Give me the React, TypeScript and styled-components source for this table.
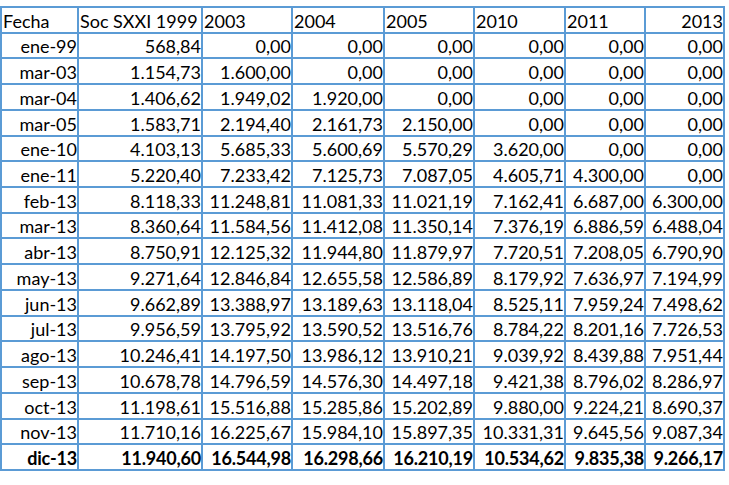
import styled, { createGlobalStyle } from 'styled-components';

const GlobalStyle = createGlobalStyle`
	body {
		margin: 0;
		background: #ffffff;
	}
`;

const Page = styled.div`
	padding-top: 6px;
`;

const Sheet = styled.div`
	display: inline-grid;
	grid-template-columns: 75px 122px 88px 90px 88px 89px 78px 77px;
	grid-auto-rows: 23.72px;
	gap: 2px;
	padding: 2px;
	background: #5b9bd5;
	font-family: Lato, 'Liberation Sans', sans-serif;
	font-size: 18px;
	color: #000000;
`;

const Cell = styled.div<{ $align: 'left' | 'right'; $bold?: boolean }>`
	display: flex;
	align-items: flex-end;
	justify-content: ${(p) => (p.$align === 'left' ? 'flex-start' : 'flex-end')};
	padding: 0 0 1px 1px;
	background: #ffffff;
	line-height: 20px;
	white-space: nowrap;
	font-weight: ${(p) => (p.$bold ? 700 : 400)};
	letter-spacing: ${(p) => (p.$bold ? '-0.2px' : '0')};
`;

const headers = ['Fecha', 'Soc SXXI 1999', '2003', '2004', '2005', '2010', '2011', '2013'];

const rows: string[][] = [
	['ene-99', '568,84', '0,00', '0,00', '0,00', '0,00', '0,00', '0,00'],
	['mar-03', '1.154,73', '1.600,00', '0,00', '0,00', '0,00', '0,00', '0,00'],
	['mar-04', '1.406,62', '1.949,02', '1.920,00', '0,00', '0,00', '0,00', '0,00'],
	['mar-05', '1.583,71', '2.194,40', '2.161,73', '2.150,00', '0,00', '0,00', '0,00'],
	['ene-10', '4.103,13', '5.685,33', '5.600,69', '5.570,29', '3.620,00', '0,00', '0,00'],
	['ene-11', '5.220,40', '7.233,42', '7.125,73', '7.087,05', '4.605,71', '4.300,00', '0,00'],
	['feb-13', '8.118,33', '11.248,81', '11.081,33', '11.021,19', '7.162,41', '6.687,00', '6.300,00'],
	['mar-13', '8.360,64', '11.584,56', '11.412,08', '11.350,14', '7.376,19', '6.886,59', '6.488,04'],
	['abr-13', '8.750,91', '12.125,32', '11.944,80', '11.879,97', '7.720,51', '7.208,05', '6.790,90'],
	['may-13', '9.271,64', '12.846,84', '12.655,58', '12.586,89', '8.179,92', '7.636,97', '7.194,99'],
	['jun-13', '9.662,89', '13.388,97', '13.189,63', '13.118,04', '8.525,11', '7.959,24', '7.498,62'],
	['jul-13', '9.956,59', '13.795,92', '13.590,52', '13.516,76', '8.784,22', '8.201,16', '7.726,53'],
	['ago-13', '10.246,41', '14.197,50', '13.986,12', '13.910,21', '9.039,92', '8.439,88', '7.951,44'],
	['sep-13', '10.678,78', '14.796,59', '14.576,30', '14.497,18', '9.421,38', '8.796,02', '8.286,97'],
	['oct-13', '11.198,61', '15.516,88', '15.285,86', '15.202,89', '9.880,00', '9.224,21', '8.690,37'],
	['nov-13', '11.710,16', '16.225,67', '15.984,10', '15.897,35', '10.331,31', '9.645,56', '9.087,34'],
];

const totals = ['dic-13', '11.940,60', '16.544,98', '16.298,66', '16.210,19', '10.534,62', '9.835,38', '9.266,17'];

const App = () => {
	return (
		<Page>
			<GlobalStyle />
			<Sheet>
				{headers.map((h, i) => (
					<Cell key={h} $align={i === headers.length - 1 ? 'right' : 'left'}>
						{h}
					</Cell>
				))}
				{rows.map((row) =>
					row.map((value, i) => (
						<Cell key={row[0] + i} $align="right">
							{value}
						</Cell>
					)),
				)}
				{totals.map((value, i) => (
					<Cell key={'total' + i} $align="right" $bold>
						{value}
					</Cell>
				))}
			</Sheet>
		</Page>
	);
};

export default App;
